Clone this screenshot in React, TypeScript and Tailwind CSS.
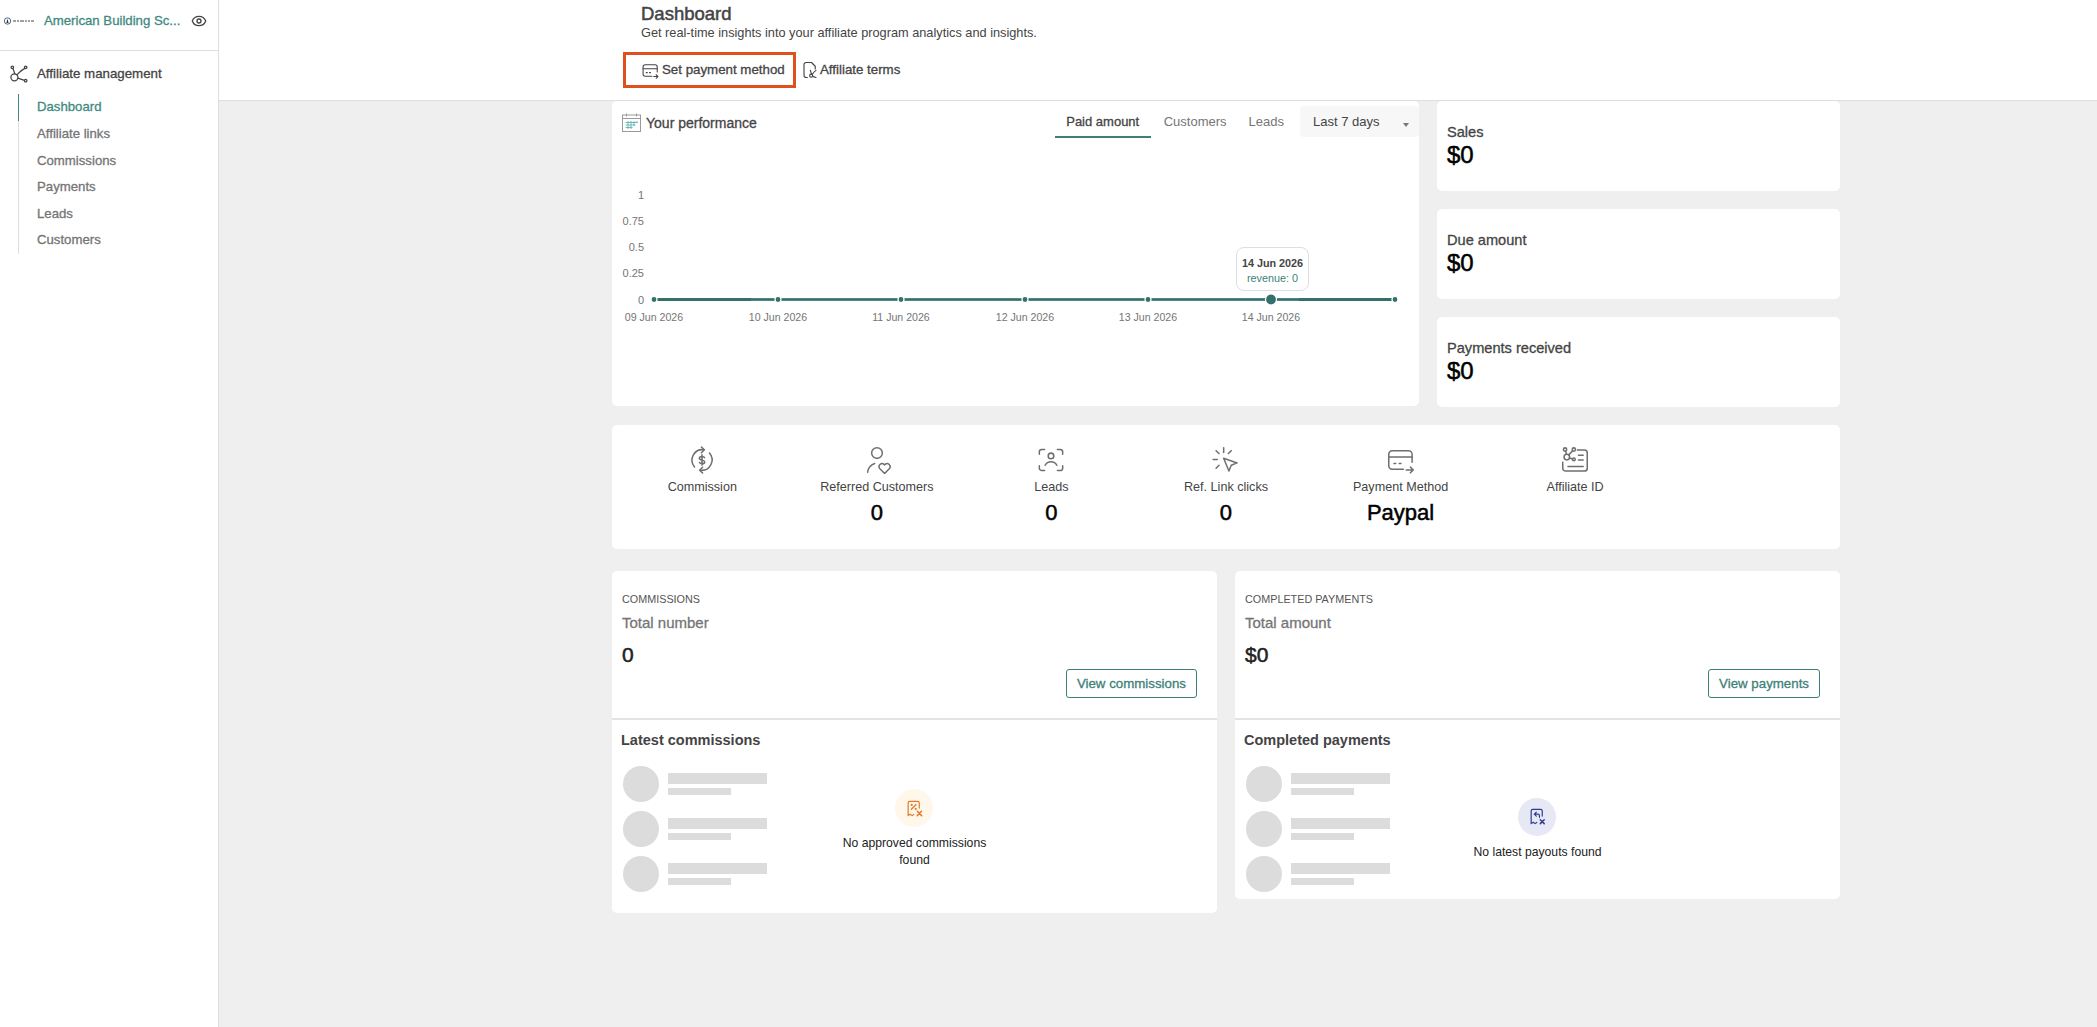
import { Eye } from "lucide-react";
import type { ReactNode } from "react";

const medium = "[-webkit-text-stroke:0.3px]";
const heavy = "[-webkit-text-stroke:0.5px]";

function Svg({ size, className, width = 1.5, children }: { size: number; className?: string; width?: number; children: ReactNode }) {
  return (
    <svg
      width={size}
      height={size}
      viewBox="0 0 24 24"
      fill="none"
      stroke="currentColor"
      strokeWidth={width}
      strokeLinecap="round"
      strokeLinejoin="round"
      className={`shrink-0 ${className ?? ""}`}
    >
      {children}
    </svg>
  );
}

function LogoMark() {
  return (
    <svg width="32" height="8" viewBox="0 0 32 8" className="shrink-0">
      <circle cx="4.5" cy="4" r="3.2" fill="none" stroke="#33415c" strokeWidth="0.8" />
      <path d="M3.4 6 4.5 1.8 5.6 6Z" fill="#1d2b4f" />
      <path d="M10 4h3M14 4h2M17 4h4M22 4h2M25 4h2M28 4h3" stroke="#444" strokeWidth="1.1" />
    </svg>
  );
}

function NetworkIcon() {
  return (
    <Svg size={20}>
      <circle cx="4" cy="4" r="1.5" />
      <circle cx="20" cy="4" r="1.5" />
      <circle cx="6.5" cy="16" r="4.2" />
      <circle cx="20" cy="20" r="1.5" />
      <path d="M4.8 5.5 7 11.8M19 5.2C15 7 12.5 10 9.5 13M10.6 17 18.5 19.6" />
    </Svg>
  );
}

function CardArrowIcon({ size, width }: { size: number; width?: number }) {
  return (
    <Svg size={size} width={width}>
      <path d="M21.5 14V7a3 3 0 0 0-3-3h-14a3 3 0 0 0-3 3v10a3 3 0 0 0 3 3H14" />
      <path d="M1.5 9.5h20M6 15h1.5M10.5 15H12M16.5 20.5h6M20 18l2.5 2.5L20 23" />
    </Svg>
  );
}

function TermsIcon() {
  return (
    <Svg size={18}>
      <path d="M14 2H7a3 3 0 0 0-3 3v14a3 3 0 0 0 3 3h1.5M14 2l5 5v3.5" />
      <circle cx="13.5" cy="19.5" r="2" />
      <path d="M12.5 12.5l1.5 5M20 12.5c-1.5 1-3.5 3-4.8 5.2M15.5 20.5l4.5 1.5" />
    </Svg>
  );
}

function CalendarIcon() {
  return (
    <svg width="19" height="19" viewBox="0 0 19 19" className="shrink-0" fill="none">
      <rect x="0.5" y="2" width="18" height="16.5" stroke="#9a9a9a" />
      <path d="M0.5 5.5h18" stroke="#9a9a9a" />
      <path d="M4.5 0.5v3M14.5 0.5v3" stroke="#9a9a9a" />
      <path d="M3.5 9.5h12M3.5 12h10M3.5 14.5h7M6 8v8M9 8v8M12 8v5M15 8v2" stroke="#5fb5ad" strokeWidth="0.9" />
    </svg>
  );
}

function CommissionIcon() {
  return (
    <Svg size={28} width={1.3} className="text-[#6f6f6f]">
      <path d="M5.6 18A9 9 0 0 1 13.5 3.2" />
      <path d="M11.5 0.8 14 3.2l-2.5 2.6" />
      <path d="M18.4 6A9 9 0 0 1 10.5 20.8" />
      <path d="M12.5 18.2 10 20.8l2.5 2.4" />
      <path d="M14.2 10c-.4-.8-1.2-1.1-2.2-1.1-1.3 0-2.3.6-2.3 1.6 0 2.2 4.6 1 4.6 3.2 0 1-1 1.6-2.3 1.6-1 0-1.8-.4-2.2-1.2M12 7.6v8.8" />
    </Svg>
  );
}

function UserHeartIcon() {
  return (
    <Svg size={28} width={1.3} className="text-[#6f6f6f]">
      <circle cx="12" cy="6" r="4.6" />
      <path d="M4 22.5a9 9 0 0 1 6-7.5" />
      <path d="M18.5 23.5l-4.2-4.2a2.6 2.6 0 0 1 3.7-3.6l.5.5.5-.5a2.6 2.6 0 0 1 3.7 3.6Z" />
    </Svg>
  );
}

function ScanUserIcon() {
  return (
    <Svg size={28} width={1.3} className="text-[#6f6f6f]">
      <path d="M2 7V5a2 2 0 0 1 2-2h2.5M17.5 3H20a2 2 0 0 1 2 2v2M22 17v2a2 2 0 0 1-2 2h-2.5M6.5 21H4a2 2 0 0 1-2-2v-2" />
      <circle cx="12" cy="8.5" r="2.4" />
      <path d="M7 16.5c1-2 2.8-3 5-3s4 1 5 3" />
    </Svg>
  );
}

function ClickIcon() {
  return (
    <Svg size={28} width={1.3} className="text-[#6f6f6f]">
      <path d="M10 1.5v4M3.5 4l2.5 2.5M16.5 4 14 6.5M1 11.5h3.5M3.5 19l2.5-2.5" />
      <path d="M10 10.5l11.5 4-5 2-2 5Z" />
    </Svg>
  );
}

function AffiliateIdIcon() {
  return (
    <Svg size={28} width={1.3} className="text-[#6f6f6f]">
      <path d="M14 3.5h6a2.5 2.5 0 0 1 2.5 2.5v13a2.5 2.5 0 0 1-2.5 2.5H4A2.5 2.5 0 0 1 1.5 19v-5" />
      <circle cx="3.5" cy="3" r="1.4" />
      <circle cx="11" cy="3" r="1.4" />
      <circle cx="5" cy="9.5" r="2.4" />
      <circle cx="11" cy="11.5" r="1.2" />
      <path d="M4 4.4 4.6 7M10 4 6.6 7.6M7.2 10.2 10 11.2M15 8h4M15 12h4M6 17.5h13" />
    </Svg>
  );
}

function ReceiptPercentIcon() {
  return (
    <Svg size={19} className="text-[#e0792b]">
      <path d="M18 11.5V5a2 2 0 0 0-2-2H6a2 2 0 0 0-2 2v16l2.5-1.8 2.5 1.8 2-1.5" />
      <path d="M8 13l6-6" />
      <circle cx="8.5" cy="7.5" r="0.6" />
      <circle cx="13.5" cy="12.5" r="0.6" />
      <path d="M15.5 15.5l5.5 5.5M21 15.5 15.5 21" strokeWidth="1.8" />
    </Svg>
  );
}

function ReceiptUndoIcon() {
  return (
    <Svg size={19} className="text-[#2f3a8f]">
      <path d="M18 11.5V5a2 2 0 0 0-2-2H6a2 2 0 0 0-2 2v16l2.5-1.8 2.5 1.8 2-1.5" />
      <path d="M10.5 6.5 8 9l2.5 2.5M8 9h4.5a2 2 0 0 1 2 2v2" />
      <path d="M15.5 16l5 5M20.5 16l-5 5" strokeWidth="1.8" />
    </Svg>
  );
}

const navItems = ["Dashboard", "Affiliate links", "Commissions", "Payments", "Leads", "Customers"];

function Sidebar() {
  return (
    <aside className="w-[219px] shrink-0 border-r border-[#dedede] bg-white">
      <div className="flex h-[51px] items-center border-b border-[#dedede] pb-[9px] pl-[3px] pr-[11px]">
        <LogoMark />
        <span className={`ml-[9px] w-[140px] truncate text-[13.2px] text-[#3f8a7f] ${medium}`}>American Building Sc...</span>
        <Eye size={16} className="ml-auto text-[#444]" />
      </div>
      <div className="flex h-[43px] items-center gap-[8px] pl-[9px] pt-[2px] text-[#444]">
        <NetworkIcon />
        <span className={`text-[13.3px] ${medium}`}>Affiliate management</span>
      </div>
      <nav className="ml-[18px] flex flex-col border-l border-[#dedede]">
        {navItems.map((item, i) => (
          <a
            key={item}
            className={`-ml-px flex h-[26.6px] items-center border-l pl-[18px] text-[13.2px] ${medium} ${
              i === 0 ? "border-[#3f8a7f] text-[#3f8a7f]" : "border-transparent text-[#757575]"
            }`}
          >
            {item}
          </a>
        ))}
      </nav>
    </aside>
  );
}

function Header() {
  return (
    <header className="h-[101px] shrink-0 border-b border-[#dedede] bg-white pl-[404px] pt-[4px]">
      <div className="pl-[18px]">
        <h1 className={`text-[18.5px] leading-[20px] text-[#444] ${heavy}`}>Dashboard</h1>
        <p className="mt-[1px] text-[12.75px] leading-[16px] text-[#444]">Get real-time insights into your affiliate program analytics and insights.</p>
      </div>
      <div className="mt-[11px] flex items-center">
        <button className={`flex h-[36px] w-[173px] items-center gap-[3px] border-[3px] border-[#e0501f] pl-[16px] text-[13.3px] text-[#444] ${medium}`}>
          <CardArrowIcon size={17} />
          Set payment method
        </button>
        <button className={`ml-[5px] flex items-center gap-[1px] text-[13.3px] text-[#444] ${medium}`}>
          <TermsIcon />
          Affiliate terms
        </button>
      </div>
    </header>
  );
}

const chartTicks = [
  { x: 43, label: "09 Jun 2026" },
  { x: 167, label: "10 Jun 2026" },
  { x: 290, label: "11 Jun 2026" },
  { x: 414, label: "12 Jun 2026" },
  { x: 537, label: "13 Jun 2026" },
  { x: 660, label: "14 Jun 2026" },
];

const yTicks = [
  { y: 57, label: "1" },
  { y: 83, label: "0.75" },
  { y: 109, label: "0.5" },
  { y: 135, label: "0.25" },
  { y: 162, label: "0" },
];

function Chart() {
  return (
    <svg width="807" height="267" viewBox="1 0 807 267" className="block [font-family:'Liberation_Sans',sans-serif]">
      {yTicks.map((t) => (
        <text key={t.label} x="33" y={t.y + 4} textAnchor="end" fontSize="11" fill="#757575">
          {t.label}
        </text>
      ))}
      <line x1="43" y1="161.5" x2="784" y2="161.5" stroke="#5c918c" strokeWidth="3" />
      <line x1="43" y1="161.5" x2="784" y2="161.5" stroke="#33706a" strokeWidth="1.5" />
      <line x1="43" y1="161.5" x2="140" y2="161.5" stroke="#33706a" strokeWidth="3" />
      <line x1="688" y1="161.5" x2="781" y2="161.5" stroke="#33706a" strokeWidth="3" />
      {[...chartTicks.slice(0, 5).map((t) => t.x), 784].map((x) => (
        <circle key={x} cx={x} cy="161.5" r="3" fill="#33706a" stroke="#fff" strokeWidth="1.2" />
      ))}
      <circle cx="660" cy="161.5" r="5.5" fill="#33706a" stroke="#fff" strokeWidth="1.2" />
      {chartTicks.map((t) => (
        <text key={t.label} x={t.x} y="183" textAnchor="middle" fontSize="10.6" fill="#757575">
          {t.label}
        </text>
      ))}
    </svg>
  );
}

function PerformanceCard() {
  return (
    <section className="relative h-[305px] rounded-[5px] bg-white">
      <div className="flex items-start pt-[5px]">
        <div className="ml-[10px] mt-[7px] flex items-center gap-[5px]">
          <CalendarIcon />
          <span className={`text-[14px] leading-[18px] text-[#444] ${medium}`}>Your performance</span>
        </div>
        <div className="ml-auto flex h-[32px] items-start text-[13px] leading-[32px]">
          <span className={`h-[32px] w-[96px] border-b-2 border-[#3e7f78] text-center text-[#444] ${medium}`}>Paid amount</span>
          <span className="pl-[13px] pr-[10px] text-[#757575]">Customers</span>
          <span className="pl-[12px] pr-[16px] text-[#757575]">Leads</span>
          <div className="relative h-[31px] w-[119px] rounded-[4px] bg-[#f7f7f7] pl-[13px] text-[#444]">
            Last 7 days
            <span className="absolute right-[10px] top-[17px] h-0 w-0 border-x-[3px] border-t-[4px] border-x-transparent border-t-[#777]" />
          </div>
        </div>
      </div>
      <Chart />
      <div className="absolute left-[624px] top-[146px] flex h-[44px] w-[73px] flex-col items-center justify-center rounded-[8px] border border-[#dedede] bg-white pt-[3px] text-[10.8px] leading-[15px]">
        <span className="font-bold text-[#444]">14 Jun 2026</span>
        <span className="text-[#3e7f78]">revenue: 0</span>
      </div>
    </section>
  );
}

function SummaryCard({ label, value }: { label: string; value: string }) {
  return (
    <div className="h-[90px] rounded-[5px] bg-white pl-[10px] pt-[22px]">
      <div className={`text-[14.6px] leading-[18px] text-[#444] ${medium}`}>{label}</div>
      <div className={`text-[24px] leading-[28px] text-black ${heavy}`}>{value}</div>
    </div>
  );
}

const stats = [
  { icon: <CommissionIcon />, label: "Commission" },
  { icon: <UserHeartIcon />, label: "Referred Customers", value: "0" },
  { icon: <ScanUserIcon />, label: "Leads", value: "0" },
  { icon: <ClickIcon />, label: "Ref. Link clicks", value: "0" },
  { icon: <CardArrowIcon size={28} width={1.3} />, label: "Payment Method", value: "Paypal" },
  { icon: <AffiliateIdIcon />, label: "Affiliate ID" },
];

function StatsCard() {
  return (
    <section className="mt-[18px] grid h-[124px] grid-cols-7 rounded-[5px] bg-white px-[3px] pt-[21px]">
      {stats.map((s) => (
        <div key={s.label} className="flex flex-col items-center text-[#6f6f6f]">
          {s.icon}
          <span className="mt-[5px] text-[12.6px] leading-[16px] text-[#444]">{s.label}</span>
          {s.value && <span className={`mt-[6px] text-[22px] leading-[24px] text-black ${heavy}`}>{s.value}</span>}
        </div>
      ))}
    </section>
  );
}

function SkeletonRows() {
  return (
    <div className="flex flex-col gap-[9px] pl-[11px]">
      {[0, 1, 2].map((i) => (
        <div key={i} className="flex items-center gap-[9px]">
          <div className="h-[36px] w-[36px] rounded-full bg-[#dcdcdc]" />
          <div className="flex flex-col gap-[4px]">
            <div className="h-[11px] w-[99px] bg-[#dcdcdc]" />
            <div className="h-[7px] w-[63px] bg-[#dcdcdc]" />
          </div>
        </div>
      ))}
    </div>
  );
}

function ListCard(props: {
  eyebrow: string;
  metric: string;
  value: string;
  action: string;
  listTitle: string;
  empty: string;
  icon: ReactNode;
  iconBg: string;
  bottom: string;
}) {
  return (
    <section className={`rounded-[5px] bg-white ${props.bottom}`}>
      <div className="h-[149px] border-b-2 border-[#e3e3e3] pl-[10px] pr-[20px] pt-[21px]">
        <div className="text-[10.8px] leading-[14px] text-[#555]">{props.eyebrow}</div>
        <div className={`mt-[9px] text-[15px] leading-[16px] text-[#757575] ${medium}`}>{props.metric}</div>
        <div className={`mt-[12px] text-[21px] leading-[24px] text-[#222] ${heavy}`}>{props.value}</div>
        <div className="mt-[2px] flex justify-end">
          <button className={`h-[29px] rounded-[3px] border border-[#3e7f78] px-[10px] text-[13.3px] text-[#3e7f78] ${medium}`}>{props.action}</button>
        </div>
      </div>
      <h2 className="pl-[9px] pt-[10px] text-[14.5px] font-bold leading-[20px] text-[#444]">{props.listTitle}</h2>
      <div className="mt-[16px] grid grid-cols-3 items-center">
        <SkeletonRows />
        <div className="flex flex-col items-center gap-[8px]">
          <div className={`flex h-[38px] w-[38px] items-center justify-center rounded-full ${props.iconBg}`}>{props.icon}</div>
          <p className="max-w-[150px] text-center text-[12.2px] leading-[17px] text-[#222]">{props.empty}</p>
        </div>
      </div>
    </section>
  );
}

export default function App() {
  return (
    <div className="flex h-screen overflow-hidden bg-[#efefef] [font-family:'Liberation_Sans',Arial,sans-serif]">
      <Sidebar />
      <main className="flex min-w-0 flex-1 flex-col">
        <Header />
        <div className="w-[1621px] pl-[393px]">
          <div className="grid grid-cols-[807px_403px] items-start gap-[18px]">
            <PerformanceCard />
            <div className="flex flex-col gap-[18px]">
              <SummaryCard label="Sales" value="$0" />
              <SummaryCard label="Due amount" value="$0" />
              <SummaryCard label="Payments received" value="$0" />
            </div>
          </div>
          <StatsCard />
          <div className="mt-[22px] grid grid-cols-[605px_605px] items-start gap-[18px]">
            <ListCard
              eyebrow="COMMISSIONS"
              metric="Total number"
              value="0"
              action="View commissions"
              listTitle="Latest commissions"
              empty="No approved commissions found"
              icon={<ReceiptPercentIcon />}
              iconBg="bg-[#fff7ea]"
              bottom="pb-[21px]"
            />
            <ListCard
              eyebrow="COMPLETED PAYMENTS"
              metric="Total amount"
              value="$0"
              action="View payments"
              listTitle="Completed payments"
              empty="No latest payouts found"
              icon={<ReceiptUndoIcon />}
              iconBg="bg-[#e6e8f5]"
              bottom="pb-[7px]"
            />
          </div>
        </div>
      </main>
    </div>
  );
}
